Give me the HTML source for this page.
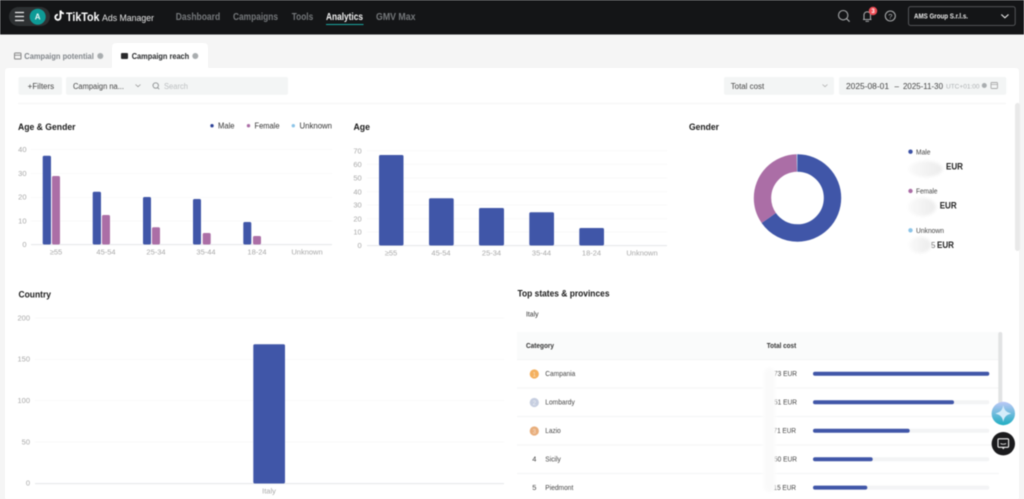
<!DOCTYPE html>
<html lang="en"><head><meta charset="utf-8"><title>Analytics</title>
<style>
html,body{margin:0;padding:0;width:1024px;height:499px;overflow:hidden;background:#f5f5f5}
svg{display:block;filter:blur(.4px)}
text{font-family:"Liberation Sans",sans-serif}
.t{font-size:9.5px;font-weight:700;fill:#1a1a1a}
.n{font-size:10px;font-weight:700;fill:#75787b}
.y{font-size:7.5px;fill:#a8a8a8;text-anchor:end}
.x{font-size:7.5px;fill:#a8a8a8;text-anchor:middle}
.l{font-size:8px;fill:#333}
.c{font-size:7.5px;fill:#444}
.e{font-size:9.5px;font-weight:700;fill:#222}
.g{stroke:#fafafa;stroke-width:1}
.a{stroke:#e4e6e8;stroke-width:1}
.m{fill:#4056a8}.f{fill:#ab6ea6}
</style></head><body>
<svg width="1024" height="499" viewBox="0 0 1024 499" xmlns="http://www.w3.org/2000/svg">
<defs>
<filter id="b" x="-40%" y="-40%" width="180%" height="180%"><feGaussianBlur stdDeviation="1.6"/></filter>
<linearGradient id="sp" x1="0" y1="0" x2="0" y2="1"><stop offset="0" stop-color="#bcc8f6"/><stop offset="1" stop-color="#20aec2"/></linearGradient>
<linearGradient id="bl" x1="0" y1="0" x2="1" y2="0"><stop offset="0" stop-color="#fafafa"/><stop offset="1" stop-color="#ececec"/></linearGradient>
</defs>

<!-- header -->
<rect width="1024" height="34.5" fill="#141517"/>
<rect x="9" y="7" width="41" height="19" rx="9.5" fill="#2e3133"/>
<path d="M15 12.5h9M15 16.5h9M15 20.5h9" stroke="#f0f0f0" stroke-width="1.3"/>
<circle cx="37.7" cy="16.7" r="8" fill="#0e9a96"/>
<text x="37.7" y="19.5" font-size="8" font-weight="700" fill="#e8f5f5" text-anchor="middle">A</text>
<path d="M60.5 10.5v6.8a2.6 2.6 0 1 1-2.6-2.6" fill="none" stroke="#fff" stroke-width="1.9"/>
<path d="M60.500 10.500c.4 1.700 1.600 2.800 3.400 3" fill="none" stroke="#fff" stroke-width="1.700"/>
<text x="66" y="21" font-size="12" font-weight="700" fill="#fff" textLength="33.500" lengthAdjust="spacingAndGlyphs">TikTok</text>
<text x="102" y="21" font-size="9.500" fill="#e6e6e6" textLength="52" lengthAdjust="spacingAndGlyphs">Ads Manager</text>
<text class="n" x="175.700" y="20" textLength="44.500" lengthAdjust="spacingAndGlyphs">Dashboard</text>
<text class="n" x="233" y="20" textLength="45" lengthAdjust="spacingAndGlyphs">Campaigns</text>
<text class="n" x="291.700" y="20" textLength="21.500" lengthAdjust="spacingAndGlyphs">Tools</text>
<text class="n" x="326" y="20" textLength="37" lengthAdjust="spacingAndGlyphs" style="fill:#f4f4f4">Analytics</text>
<text class="n" x="376" y="20" textLength="39.500" lengthAdjust="spacingAndGlyphs">GMV Max</text>
<rect x="326" y="24" width="37.500" height="1" fill="#1aa6a0"/>
<circle cx="843.200" cy="15.200" r="4.700" fill="none" stroke="#a4a6a8" stroke-width="1.100"/>
<path d="M846.600 18.700l3 3" stroke="#a4a6a8" stroke-width="1.200"/>
<path d="M863 19.500h8.500M864 19v-4.500a3.300 3.300 0 0 1 6.500 0V19" fill="none" stroke="#a4a6a8" stroke-width="1.100"/>
<path d="M865.500 21.300h3.500" stroke="#a4a6a8" stroke-width="1"/>
<circle cx="873" cy="11" r="4.200" fill="#ee4d55"/>
<text x="873" y="13.200" font-size="6" font-weight="700" fill="#fff" text-anchor="middle">3</text>
<circle cx="890.300" cy="16" r="5" fill="none" stroke="#a4a6a8" stroke-width="1.100"/>
<text x="890.300" y="18.800" font-size="7.500" fill="#b0b2b4" text-anchor="middle">?</text>
<rect x="908.500" y="6.700" width="106.700" height="18.700" rx="2" fill="#141517" stroke="#5a5c5f" stroke-width=".9"/>
<text x="914" y="18.500" font-size="7" font-weight="700" fill="#ececec" textLength="54" lengthAdjust="spacingAndGlyphs">AMS Group S.r.l.s.</text>
<path d="M1001.300 14.500l3.600 3.300 3.600-3.300" fill="none" stroke="#eee" stroke-width="1.100"/>

<!-- tabs -->
<path d="M112 68V47a4 4 0 0 1 4-4h88a4 4 0 0 1 4 4v21z" fill="#fff"/>
<rect x="14.500" y="53" width="6.500" height="6" rx=".8" fill="none" stroke="#888" stroke-width="1"/>
<path d="M14.500 55.200h6.500" stroke="#888" stroke-width=".9"/>
<text x="24.300" y="58.800" font-size="8" font-weight="700" fill="#80858a" textLength="69.500" lengthAdjust="spacingAndGlyphs">Campaign potential</text>
<circle cx="100.300" cy="56" r="3" fill="#a9adaf"/>
<rect x="121" y="53" width="7" height="6" rx="1" fill="#2a2a2c"/>
<text x="131.700" y="58.800" font-size="8" font-weight="700" fill="#26282a" textLength="57.500" lengthAdjust="spacingAndGlyphs">Campaign reach</text>
<circle cx="195.300" cy="56" r="3" fill="#a9adaf"/>

<!-- card -->
<path d="M5 499V71a3 3 0 0 1 3-3h1008a3 3 0 0 1 3 3v428z" fill="#fff"/>
<rect x="18.500" y="77" width="43.500" height="17.700" rx="2" fill="#f3f5f5"/>
<text x="27.700" y="88.800" font-size="8" fill="#444" textLength="26.500" lengthAdjust="spacingAndGlyphs">+Filters</text>
<rect x="66" y="77" width="222" height="17.700" rx="2" fill="#f3f5f5"/>
<text x="73" y="88.800" font-size="8" fill="#444" textLength="51" lengthAdjust="spacingAndGlyphs">Campaign na...</text>
<path d="M135.500 84.500l2.500 2.200 2.500-2.200" fill="none" stroke="#999" stroke-width=".8"/>
<circle cx="155.700" cy="85.500" r="2.700" fill="none" stroke="#8c9092" stroke-width=".9"/>
<path d="M157.600 87.600l1.600 1.600" stroke="#8c9092" stroke-width=".9"/>
<text x="164" y="88.800" font-size="8" fill="#bcbfc1" textLength="24" lengthAdjust="spacingAndGlyphs">Search</text>
<rect x="724" y="77" width="110" height="17.700" rx="2" fill="#f3f5f5"/>
<text x="730.700" y="88.800" font-size="8" fill="#444" textLength="33.500" lengthAdjust="spacingAndGlyphs">Total cost</text>
<path d="M822.500 84.500l2.500 2.200 2.500-2.200" fill="none" stroke="#b0b0b0" stroke-width=".8"/>
<rect x="839" y="77" width="167.300" height="17.700" rx="2" fill="#f3f5f5"/>
<text x="846" y="88.800" font-size="8.500" fill="#444" textLength="43" lengthAdjust="spacingAndGlyphs">2025-08-01</text>
<text x="894.500" y="88.800" font-size="8" fill="#444">–</text>
<text x="903" y="88.800" font-size="8.500" fill="#444" textLength="40" lengthAdjust="spacingAndGlyphs">2025-11-30</text>
<text x="946" y="88.300" font-size="6.500" fill="#aeb1b3" textLength="33.500" lengthAdjust="spacingAndGlyphs">UTC+01:00</text>
<circle cx="984.300" cy="85.500" r="2.500" fill="#a9adaf"/>
<rect x="991" y="82.500" width="6.500" height="6" rx=".7" fill="none" stroke="#aaa" stroke-width=".9"/>
<path d="M991 84.500h6.500" stroke="#aaa" stroke-width=".8"/>
<path d="M18 103.500h988" stroke="#f4f4f4"/>
<rect x="1015" y="103" width="5" height="148" rx="2.500" fill="#e9e9e9"/>

<!-- Age & Gender -->
<text class="t" x="18" y="130" textLength="57.500" lengthAdjust="spacingAndGlyphs">Age &amp; Gender</text>
<circle cx="212" cy="125.700" r="1.700" fill="#2f4398"/><text class="l" x="218" y="128.500" textLength="16.500" lengthAdjust="spacingAndGlyphs">Male</text>
<circle cx="248.500" cy="125.700" r="1.700" fill="#ab6ea6"/><text class="l" x="254.500" y="128.500" textLength="25" lengthAdjust="spacingAndGlyphs">Female</text>
<circle cx="293.300" cy="125.700" r="1.700" fill="#8cc4e8"/><text class="l" x="299.500" y="128.500" textLength="32.500" lengthAdjust="spacingAndGlyphs">Unknown</text>
<path class="g" d="M31 149.500h301M31 173.500h301M31 197.500h301M31 221h301"/>
<path class="a" d="M31 244.600h301"/>
<g class="y"><text x="26.500" y="152">40</text><text x="26.500" y="176">30</text><text x="26.500" y="199.700">20</text><text x="26.500" y="223.400">10</text><text x="26.500" y="247">0</text></g>
<rect class="m" x="42.700" y="155.700" width="8.300" height="88.800" rx="1.500"/><rect class="f" x="52" y="176" width="8" height="68.500" rx="1.500"/>
<rect class="m" x="92.700" y="191.700" width="8.300" height="52.800" rx="1.500"/><rect class="f" x="102" y="215" width="8" height="29.500" rx="1.500"/>
<rect class="m" x="143" y="197" width="8" height="47.500" rx="1.500"/><rect class="f" x="152" y="227.300" width="8" height="17.200" rx="1.500"/>
<rect class="m" x="193" y="199" width="8" height="45.500" rx="1.500"/><rect class="f" x="202.700" y="233" width="8" height="11.500" rx="1.500"/>
<rect class="m" x="243.300" y="222" width="8" height="22.500" rx="1.500"/><rect class="f" x="253" y="236" width="8" height="8.500" rx="1.500"/>
<g class="x"><text x="56" y="254.700">≥55</text><text x="106" y="254.700">45-54</text><text x="156" y="254.700">25-34</text><text x="206" y="254.700">35-44</text><text x="257" y="254.700">18-24</text><text x="307" y="254.700">Unknown</text></g>

<!-- Age -->
<text class="t" x="353.500" y="130" textLength="16.500" lengthAdjust="spacingAndGlyphs">Age</text>
<path class="g" d="M367 150.700h300M367 164.300h300M367 178h300M367 191.700h300M367 205h300M367 218.700h300M367 232h300"/>
<path class="a" d="M367 245.600h300"/>
<g class="y"><text x="361.700" y="153.300">70</text><text x="361.700" y="167">60</text><text x="361.700" y="180.700">50</text><text x="361.700" y="194.300">40</text><text x="361.700" y="207.700">30</text><text x="361.700" y="221.300">20</text><text x="361.700" y="234.700">10</text><text x="361.700" y="248">0</text></g>
<rect class="m" x="379" y="155" width="24.500" height="90.500" rx="1.500"/>
<rect class="m" x="429" y="198.300" width="24.700" height="47.200" rx="1.500"/>
<rect class="m" x="479" y="208" width="25" height="37.500" rx="1.500"/>
<rect class="m" x="529.300" y="212.300" width="24.700" height="33.200" rx="1.500"/>
<rect class="m" x="579.300" y="228" width="24.700" height="17.500" rx="1.500"/>
<g class="x"><text x="391" y="255.700">≥55</text><text x="441" y="255.700">45-54</text><text x="491.500" y="255.700">25-34</text><text x="541.500" y="255.700">35-44</text><text x="591.500" y="255.700">18-24</text><text x="642" y="255.700">Unknown</text></g>

<!-- Gender -->
<text class="t" x="689" y="130" textLength="30" lengthAdjust="spacingAndGlyphs">Gender</text>
<g transform="rotate(-90 797.500 198)" fill="none" stroke-width="17.400">
<circle cx="797.500" cy="198" r="35" stroke="#4056a8" stroke-dasharray="143.400 219.900"/>
<circle cx="797.500" cy="198" r="35" stroke="#ab6ea6" stroke-dasharray="75.500 219.900" stroke-dashoffset="-143.400"/>
<circle cx="797.500" cy="198" r="35" stroke="#9fc4e6" stroke-dasharray="1 219.900" stroke-dashoffset="-218.900"/>
</g>
<circle cx="910.500" cy="151.700" r="2.200" fill="#3c52a6"/><text x="916" y="154.400" font-size="7" fill="#444" textLength="14.500" lengthAdjust="spacingAndGlyphs">Male</text>
<ellipse cx="925.500" cy="169" rx="17" ry="8" fill="url(#bl)" filter="url(#b)"/>
<text class="e" x="946" y="169.500" textLength="17" lengthAdjust="spacingAndGlyphs">EUR</text>
<circle cx="910.500" cy="191" r="2.200" fill="#ab6ea6"/><text x="916" y="193.700" font-size="7" fill="#444" textLength="21.500" lengthAdjust="spacingAndGlyphs">Female</text>
<ellipse cx="922" cy="207" rx="14" ry="9" fill="url(#bl)" filter="url(#b)"/>
<text class="e" x="939.700" y="208.700" textLength="17" lengthAdjust="spacingAndGlyphs">EUR</text>
<circle cx="910.500" cy="230.300" r="2.200" fill="#8cc4e8"/><text x="916" y="233" font-size="7" fill="#444" textLength="28" lengthAdjust="spacingAndGlyphs">Unknown</text>
<text x="931" y="248" font-size="8" fill="#666">5</text>
<ellipse cx="920" cy="245" rx="11" ry="8" fill="url(#bl)" filter="url(#b)"/>
<text class="e" x="937" y="248" textLength="17" lengthAdjust="spacingAndGlyphs">EUR</text>

<!-- Country -->
<text class="t" x="18.500" y="297.300" textLength="32.500" lengthAdjust="spacingAndGlyphs">Country</text>
<path class="g" d="M35 318h469M35 359.500h469M35 400.500h469M35 442h469"/>
<path class="a" d="M35 483.600h469"/>
<g class="y"><text x="30" y="320.300">200</text><text x="30" y="361.700">150</text><text x="30" y="403">100</text><text x="30" y="444.300">50</text><text x="30" y="485.700">0</text></g>
<rect class="m" x="253.300" y="344.300" width="31.700" height="139.200" rx="1.500"/>
<text class="x" x="269" y="493.500">Italy</text>

<!-- Top states -->
<text class="t" x="517.500" y="296.700" textLength="92" lengthAdjust="spacingAndGlyphs">Top states &amp; provinces</text>
<text x="526" y="316.500" font-size="7.500" fill="#333" textLength="12.500" lengthAdjust="spacingAndGlyphs">Italy</text>
<rect x="517" y="332" width="482" height="27.500" fill="#fafbfb"/>
<path d="M517 359.600h482M517 388h482M517 416.500h482M517 445h482M517 473.500h482" stroke="#f3f4f5"/>
<text x="526" y="347.800" font-size="7.500" font-weight="700" fill="#333" textLength="28" lengthAdjust="spacingAndGlyphs">Category</text>
<text x="766.700" y="347.800" font-size="7.500" font-weight="700" fill="#333" textLength="29.500" lengthAdjust="spacingAndGlyphs">Total cost</text>
<circle cx="534.300" cy="374" r="4.600" fill="#f4b05e"/><text x="534.300" y="376.300" font-size="6" fill="#fde3c0" text-anchor="middle">1</text>
<circle cx="534.300" cy="402.500" r="4.600" fill="#c6cee0"/><text x="534.300" y="404.800" font-size="6" fill="#eef0f6" text-anchor="middle">2</text>
<circle cx="534.300" cy="431" r="4.600" fill="#e8ae7c"/><text x="534.300" y="433.300" font-size="6" fill="#f8e0cc" text-anchor="middle">3</text>
<text class="c" x="534.300" y="461.700" text-anchor="middle">4</text>
<text class="c" x="534.300" y="490" text-anchor="middle">5</text>
<text class="c" x="545.300" y="376.200" textLength="30" lengthAdjust="spacingAndGlyphs">Campania</text>
<text class="c" x="545.300" y="404.700" textLength="29.500" lengthAdjust="spacingAndGlyphs">Lombardy</text>
<text class="c" x="545.300" y="433.200" textLength="15.500" lengthAdjust="spacingAndGlyphs">Lazio</text>
<text class="c" x="545.300" y="461.700" textLength="15.500" lengthAdjust="spacingAndGlyphs">Sicily</text>
<text class="c" x="545.300" y="490" textLength="28" lengthAdjust="spacingAndGlyphs">Piedmont</text>
<g class="c">
<text x="774" y="376.200" textLength="23" lengthAdjust="spacingAndGlyphs">73 EUR</text>
<text x="774" y="404.700" textLength="23" lengthAdjust="spacingAndGlyphs">51 EUR</text>
<text x="773.500" y="433.200" textLength="22.500" lengthAdjust="spacingAndGlyphs">71 EUR</text>
<text x="774" y="461.700" textLength="23" lengthAdjust="spacingAndGlyphs">50 EUR</text>
<text x="773.500" y="490" textLength="22.500" lengthAdjust="spacingAndGlyphs">15 EUR</text>
</g>
<rect x="763" y="367" width="12" height="125" rx="5" fill="#fff" filter="url(#b)"/>
<rect x="764" y="368" width="11" height="124" rx="5" fill="#fafafa" filter="url(#b)"/>
<g fill="#f3f4f5"><rect x="813" y="371.700" width="176.300" height="4" rx="2"/><rect x="813" y="400.200" width="176.300" height="4" rx="2"/><rect x="813" y="428.700" width="176.300" height="4" rx="2"/><rect x="813" y="457.200" width="176.300" height="4" rx="2"/><rect x="813" y="485.600" width="176.300" height="4" rx="2"/></g>
<g fill="#4056a8"><rect x="813" y="371.700" width="176.300" height="4" rx="2"/><rect x="813" y="400.200" width="141" height="4" rx="2"/><rect x="813" y="428.700" width="96.700" height="4" rx="2"/><rect x="813" y="457.200" width="59.700" height="4" rx="2"/><rect x="813" y="485.600" width="54.300" height="4" rx="2"/></g>
<rect x="998.300" y="332" width="4" height="80" rx="2" fill="#e2e3e4"/>

<!-- floating -->
<circle cx="1003.300" cy="413.500" r="11.700" fill="url(#sp)"/>
<path d="M1003.300 405c.9 5 2.600 7 8 8.500-5.400 1.500-7.100 3.500-8 8.500-.9-5-2.600-7-8-8.500 5.400-1.500 7.100-3.500 8-8.500z" fill="#d4ecfa"/>
<circle cx="1003.300" cy="443.700" r="11.700" fill="#1b1b1d"/>
<rect x="998" y="438.800" width="10.600" height="8.500" rx="1" fill="none" stroke="#f2f2f2" stroke-width="1.100"/>
<path d="M1000.500 443.500c1.500 1 4 1 5.600 0" fill="none" stroke="#f2f2f2" stroke-width=".8"/>
<path d="M1002.300 447.500l1 1.200 1-1.200" fill="none" stroke="#f2f2f2" stroke-width=".9"/>
</svg>
</body></html>
